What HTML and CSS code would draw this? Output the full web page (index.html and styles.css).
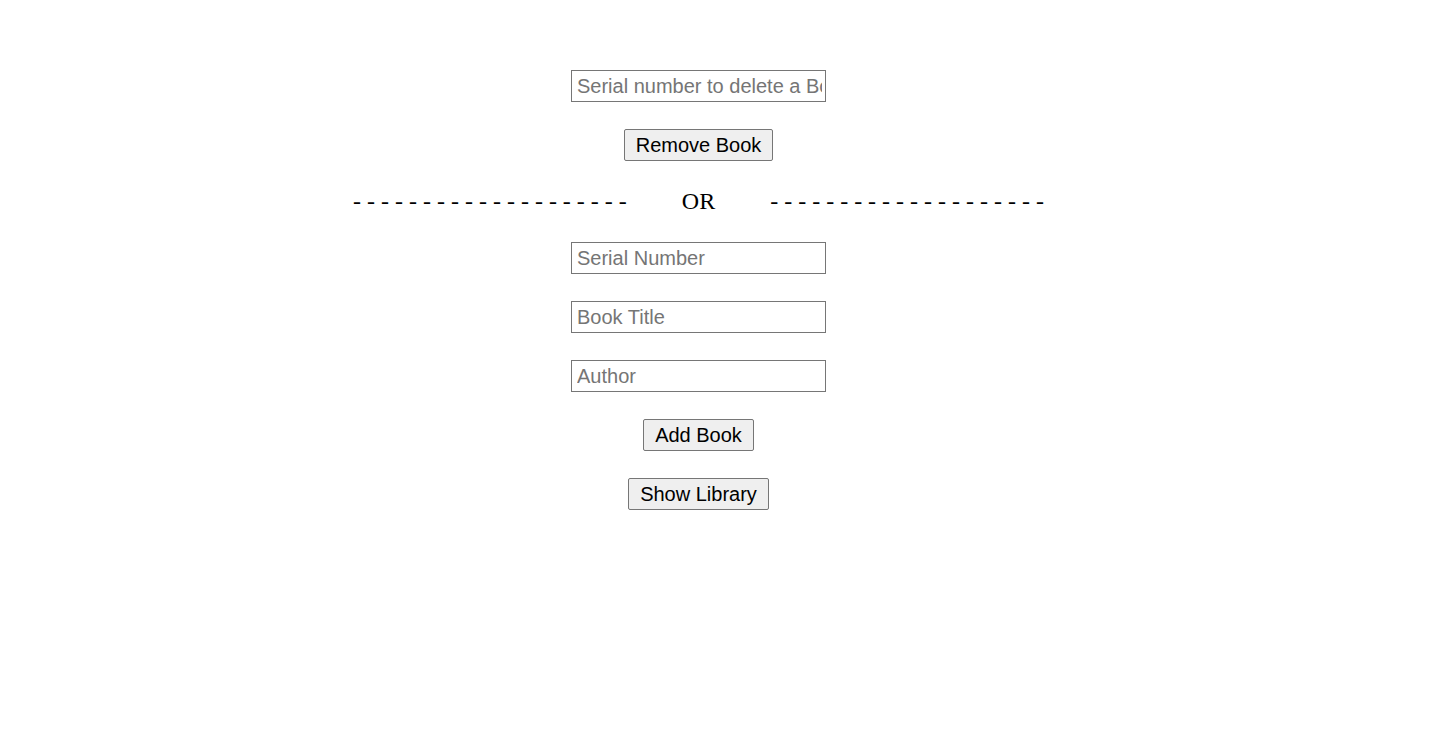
FILE: index.html
```html
<!DOCTYPE html>
<html lang="en">
<head>
    <meta charset="UTF-8">
    <meta name="viewport" content="width=device-width, initial-scale=1.0">
    <title>Library</title>
    <link rel="stylesheet" href="styles.css">
</head>
<body>
    <div class="container">
        <input type="text" id="deleteSerial" placeholder="Serial number to delete a Book">
        <button id="removeBtn">Remove Book</button>
        <div class="divider">
            <span>- - - - - - - - - - - - - - - - - - - -</span>
            <span>OR</span>
            <span>- - - - - - - - - - - - - - - - - - - -</span>
        </div>
        <input type="text" id="serial" placeholder="Serial Number">
        <input type="text" id="title" placeholder="Book Title">
        <input type="text" id="author" placeholder="Author">
        <button id="addBtn">Add Book</button>
        <button id="showBtn">Show Library</button>
    </div>
</body>
</html>
```

FILE: styles.css
```css
body {
    margin: 0;
    font-family: "Liberation Serif", "Times New Roman", serif;
    background: white;
}
.container {
    display: flex;
    flex-direction: column;
    align-items: center;
    gap: 27px;
    padding: 70px 40px 0 0;
}
input {
    box-sizing: border-box;
    width: 255px;
    height: 32px;
    padding: 1px 3px 1px 5px;
    border: 1px solid #767676;
    border-radius: 0;
    font-family: "Liberation Sans", Arial, sans-serif;
    font-size: 20px;
    color: #000;
}
input::placeholder {
    color: #757575;
}
button {
    box-sizing: border-box;
    height: 32px;
    padding: 0 11px;
    border: 1px solid #767676;
    border-radius: 2px;
    background-color: #efefef;
    font-family: "Liberation Sans", Arial, sans-serif;
    font-size: 20px;
    color: #000;
}
.divider {
    display: flex;
    gap: 55px;
    font-size: 24px;
    white-space: pre;
}
```
